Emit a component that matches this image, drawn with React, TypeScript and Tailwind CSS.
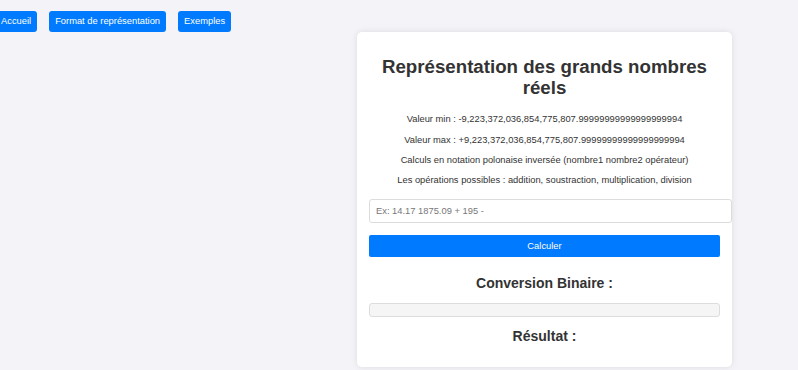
export default function App() {
  const font = { fontFamily: '"Liberation Sans", Arial, sans-serif' };
  const navBtn =
    "h-[21px] px-[6px] rounded-[3px] bg-[#007bff] text-white text-[9.35px] leading-[21px] whitespace-nowrap";
  return (
    <div className="min-h-[370px] w-[798px] bg-[#f4f4f8] text-[#333]" style={font}>
      <nav className="flex gap-[12px] pt-[11px] ml-[-5px]">
        <button className={navBtn}>Accueil</button>
        <button className={navBtn}>Format de représentation</button>
        <button className={navBtn}>Exemples</button>
      </nav>
      <div className="ml-[357px] w-[375px] bg-white rounded-[5px] shadow-[0_0_6px_rgba(0,0,0,0.1)] pt-[23.5px] pb-[22.4px] px-[12px]">
        <h1 className="text-center font-bold text-[18.7px] leading-[21.5px] text-[#333]">
          Représentation des grands nombres réels
        </h1>
        <div className="mt-[14px] flex flex-col text-center text-[9.35px] leading-[12px] text-[#333]">
          <p>Valeur min : -9,223,372,036,854,775,807.99999999999999999994</p>
          <p className="mt-[9.5px]">Valeur max : +9,223,372,036,854,775,807.99999999999999999994</p>
          <p className="mt-[8px]">Calculs en notation polonaise inversée (nombre1 nombre2 opérateur)</p>
          <p className="mt-[8px]">Les opérations possibles : addition, soustraction, multiplication, division</p>
        </div>
        <input
          className="mt-[13px] block w-[363px] h-[24px] border border-[#dcdcdc] rounded-[3px] px-[6px] text-[9.35px] placeholder:text-[#777] outline-none"
          placeholder="Ex: 14.17 1875.09 + 195 -"
        />
        <button className="mt-[12px] block w-full h-[22px] rounded-[2px] bg-[#007bff] text-white text-[9.35px]">
          Calculer
        </button>
        <h2 className="mt-[17.6px] text-center font-bold text-[14px] leading-[17px]">Conversion Binaire :</h2>
        <div className="mt-[11.4px] h-[14px] bg-[#f5f5f5] border border-[#ddd] rounded-[3px]"></div>
        <h2 className="mt-[10.6px] text-center font-bold text-[14px] leading-[17px]">Résultat :</h2>
      </div>
    </div>
  );
}
